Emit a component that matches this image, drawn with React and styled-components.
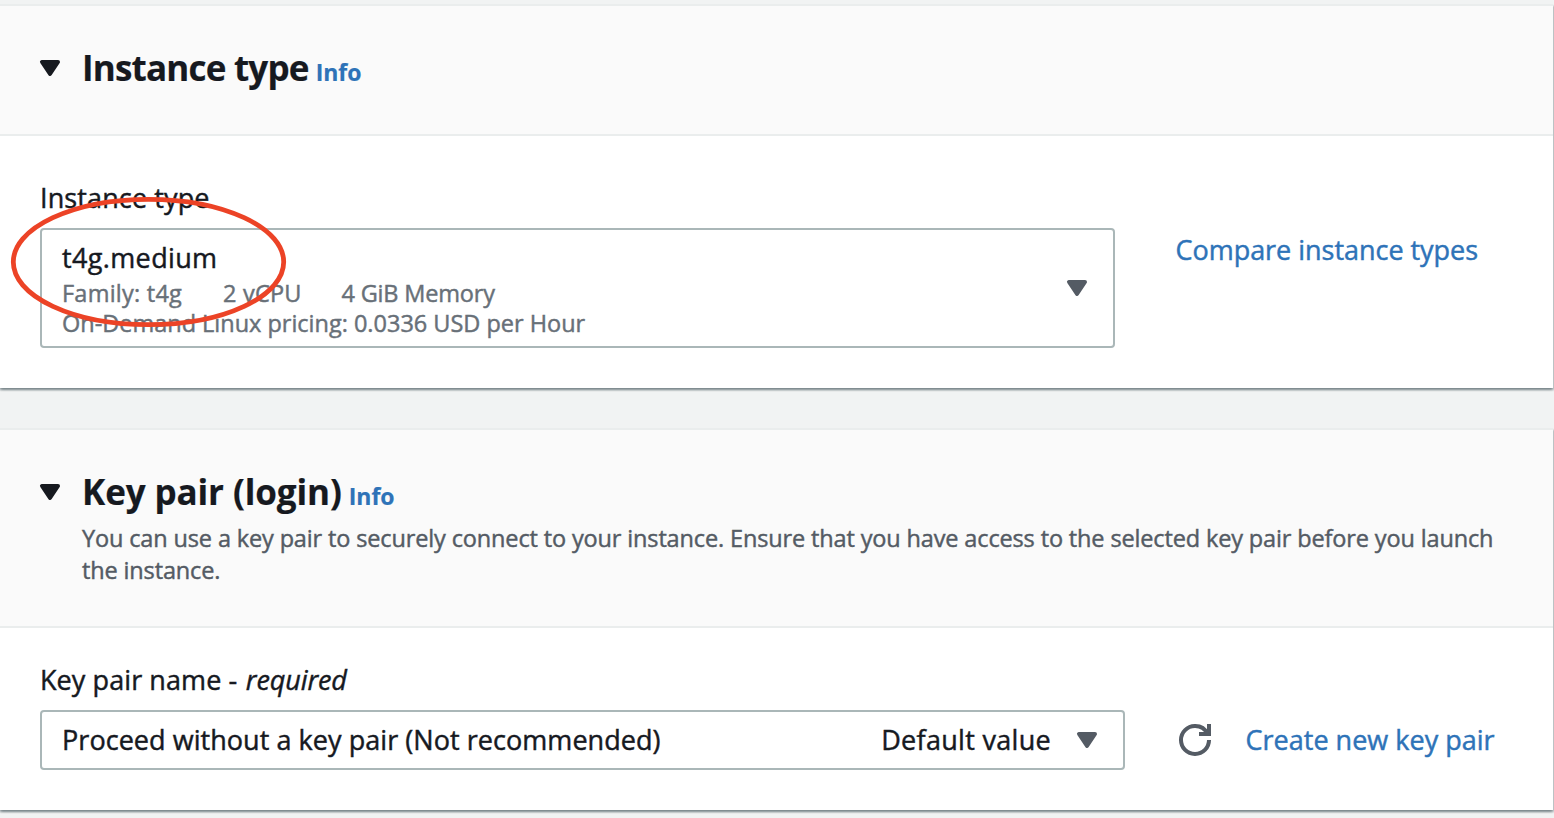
import React from 'react';
import styled, { createGlobalStyle } from 'styled-components';

const GlobalStyle = createGlobalStyle`
  *, *::before, *::after { box-sizing: border-box; }
  html, body { margin: 0; height: 818px; overflow: hidden; background: #f1f3f3; }
  body {
    font-family: "Open Sans", "Noto Sans", sans-serif;
    font-size: 27px;
    color: #16191f;
    -webkit-text-stroke: 0.45px currentColor;
  }
`;

const Page = styled.main`
  position: relative;
  display: flex;
  flex-direction: column;
  gap: 40px;
  width: 1553px;
  padding-top: 4px;
`;

const Card = styled.section`
  display: flex;
  flex-direction: column;
  height: ${(p) => p.$height}px;
  border-top: 2px solid #eaeded;
  background: #fff;
  box-shadow: 0 2px 2px 0 rgba(0, 28, 36, 0.3), 2px 2px 2px 0 rgba(0, 28, 36, 0.15),
    -2px 2px 2px 0 rgba(0, 28, 36, 0.15);
`;

const CardHeader = styled.header`
  display: flex;
  align-items: flex-start;
  gap: 16px;
  height: ${(p) => p.$height}px;
  padding: 40px 40px 0 34px;
  border-bottom: 2px solid #eaeded;
  background: #fafafa;
`;

const CaretIcon = styled.svg`
  flex: none;
  width: 32px;
  height: 32px;
  margin-top: ${(p) => p.$top || 0}px;
  fill: currentColor;
  stroke: currentColor;
  stroke-width: 2;
  stroke-linejoin: round;
`;

const HeaderText = styled.div`
  display: flex;
  flex-direction: column;
  gap: 8px;
`;

const TitleRow = styled.div`
  display: flex;
  align-items: baseline;
  height: 44px;
  -webkit-text-stroke: 0.2px currentColor;
`;

const Title = styled.h2`
  margin: 0;
  font-size: 35px;
  font-weight: 700;
  line-height: 44px;
  letter-spacing: ${(p) => p.$spacing}px;
`;

const InfoLink = styled.a`
  margin-left: 7px;
  font-size: 23px;
  font-weight: 700;
  color: #2e73b8;
`;

const Description = styled.p`
  margin: 0;
  width: 1425px;
  font-size: 23.5px;
  line-height: 32px;
  letter-spacing: -0.138px;
  color: #545b64;
`;

const CardBody = styled.div`
  display: flex;
  align-items: flex-start;
  padding: ${(p) => p.$top}px 40px 0;
`;

const Field = styled.div`
  display: flex;
  flex-direction: column;
  gap: 15px;
  width: ${(p) => p.$width}px;
`;

const Text = styled.span`
  white-space: pre;
  letter-spacing: ${(p) => p.$spacing || 0}px;
`;

const Label = styled.label`
  height: 30px;
  line-height: 30px;
  white-space: pre;
`;

const Required = styled.em`
  margin-left: 1.5px;
  letter-spacing: -0.1px;
`;

const Select = styled.div`
  display: flex;
  align-items: center;
  height: ${(p) => p.$height}px;
  padding: 0 20px;
  border: 2px solid #aab7b8;
  border-radius: 4px;
  background: #fff;
`;

const SelectContent = styled.div`
  display: flex;
  flex: 1;
  flex-direction: column;
`;

const OptionName = styled.div`
  height: 36px;
  line-height: 36px;
`;

const SelectValue = styled.div`
  display: flex;
  flex: 1;
  justify-content: space-between;
  height: 36px;
  line-height: 36px;
`;

const OptionDetails = styled.div`
  display: flex;
  height: 30px;
  font-size: 23.5px;
  line-height: 34px;
  color: #687078;
`;

const Tag = styled(Text)`
  width: ${(p) => p.$width}px;
`;

const SelectCaret = styled.span`
  display: flex;
  margin-left: 20px;
  color: #545b64;
`;

const Link = styled.a`
  margin-left: ${(p) => p.$left}px;
  margin-top: ${(p) => p.$top}px;
  line-height: 36px;
  letter-spacing: ${(p) => p.$spacing}px;
  white-space: nowrap;
  color: #2e73b8;
`;

const RefreshIcon = styled.svg`
  flex: none;
  width: 32px;
  height: 32px;
  margin: 59px 0 0 54px;
  fill: none;
  stroke: #545b64;
  stroke-width: 2;
`;

const Highlight = styled.svg`
  position: absolute;
  left: 8px;
  top: 194px;
  width: 282px;
  height: 136px;
  fill: none;
  stroke: #ec4326;
  stroke-width: 4.8;
`;

function Caret({ top }) {
  return (
    <CaretIcon viewBox="0 0 16 16" $top={top} aria-hidden="true">
      <path d="M4 5h8l-4 6-4-6z" />
    </CaretIcon>
  );
}

export default function App() {
  return (
    <>
      <GlobalStyle />
      <Page>
        <Card $height={384}>
          <CardHeader $height={130}>
            <Caret top={6} />
            <HeaderText>
              <TitleRow>
                <Title $spacing={-0.8}>Instance type</Title>
                <InfoLink>Info</InfoLink>
              </TitleRow>
            </HeaderText>
          </CardHeader>
          <CardBody $top={47}>
            <Field $width={1075}>
              <Label><Text $spacing={0.12}>Instance type</Text></Label>
              <Select $height={120}>
                <SelectContent>
                  <OptionName><Text $spacing={0.36}>t4g.medium</Text></OptionName>
                  <OptionDetails>
                    <Tag $width={161} $spacing={0.24}>Family: t4g</Tag>
                    <Tag $width={118.5} $spacing={0.2}>2 vCPU</Tag>
                    <Text $spacing={-0.18}>4 GiB Memory</Text>
                  </OptionDetails>
                  <OptionDetails>
                    <Text $spacing={-0.01}>On-Demand Linux pricing: 0.0336 USD per Hour</Text>
                  </OptionDetails>
                </SelectContent>
                <SelectCaret><Caret /></SelectCaret>
              </Select>
            </Field>
            <Link $left={60.5} $top={49} $spacing={-0.03}>Compare instance types</Link>
          </CardBody>
        </Card>
        <Card $height={382}>
          <CardHeader $height={198}>
            <Caret top={6} />
            <HeaderText>
              <TitleRow>
                <Title $spacing={-0.11}>Key pair (login)</Title>
                <InfoLink>Info</InfoLink>
              </TitleRow>
              <Description>
                You can use a key pair to securely connect to your instance. Ensure that you have
                access to the selected key pair before you launch the instance.
              </Description>
            </HeaderText>
          </CardHeader>
          <CardBody $top={37}>
            <Field $width={1085}>
              <Label>
                <Text $spacing={0.08}>Key pair name - </Text>
                <Required>required</Required>
              </Label>
              <Select $height={60}>
                <SelectValue>
                  <Text $spacing={0.05}>Proceed without a key pair (Not recommended)</Text>
                  <Text $spacing={0.3}>Default value</Text>
                </SelectValue>
                <SelectCaret><Caret /></SelectCaret>
              </Select>
            </Field>
            <RefreshIcon viewBox="0 0 16 16" aria-hidden="true">
              <path d="M10 5h5V0" />
              <path d="M15 8a6.957 6.957 0 0 1-7 7 6.957 6.957 0 0 1-7-7 6.957 6.957 0 0 1 7-7 6.87 6.87 0 0 1 6.3 4" />
            </RefreshIcon>
            <Link $left={34.5} $top={57} $spacing={0.01}>Create new key pair</Link>
          </CardBody>
        </Card>
        <Highlight viewBox="0 0 282 136" aria-hidden="true">
          <ellipse cx="140.5" cy="68" rx="135.2" ry="62.7" />
        </Highlight>
      </Page>
    </>
  );
}
